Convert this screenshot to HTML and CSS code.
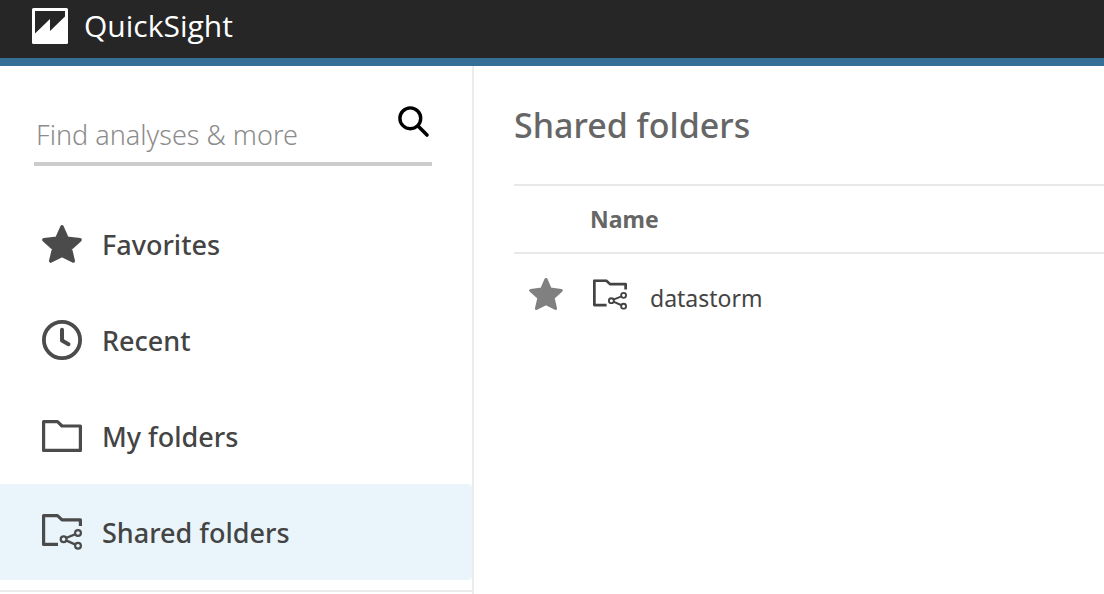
FILE: index.html
```html
<!DOCTYPE html>
<html lang="en">
<head>
<meta charset="utf-8">
<title>QuickSight</title>
<link rel="stylesheet" href="styles.css">
</head>
<body>
<svg class="symbols" aria-hidden="true">
  <symbol id="star" viewBox="0 0 40 40">
    <path fill="currentColor" stroke="currentColor" stroke-width="3.6" stroke-linejoin="round" d="M20 2.9 25 14.2 38 15.8 28.3 24.6 31.2 37 20 31.4 8.8 37 11.7 24.6 2 15.8 15 14.2Z"/>
  </symbol>
  <symbol id="shared" viewBox="0 0 40 36">
    <g fill="none" stroke="currentColor">
      <path stroke-width="3.2" stroke-linejoin="round" d="M16 30.4H1.6V1.6H15.5L20 5.8H38.4V12"/>
      <path stroke-width="2.4" d="M24 24 33.5 20.2M24 26.4 33.5 30.6"/>
      <g stroke-width="2.2"><circle cx="21.6" cy="25.3" r="2.9"/><circle cx="36" cy="19" r="2.9"/><circle cx="36" cy="31.8" r="2.9"/></g>
    </g>
  </symbol>
</svg>
<header class="topbar">
  <svg class="logo" viewBox="0 0 36 36" aria-hidden="true">
    <rect width="36" height="36" rx="1.5" fill="#fff"/>
    <path fill="#262626" d="M3 3H33V8.5L18 23V11L3 25.5Z"/>
  </svg>
  <span class="brand">QuickSight</span>
</header>
<div class="layout">
  <aside class="sidebar">
    <form class="search">
      <input class="search-input" type="text" aria-label="Find analyses &amp; more" placeholder="Find analyses &amp; more">
      <button class="search-button" type="button" aria-label="Search">
        <svg class="search-icon" viewBox="0 0 32 32" aria-hidden="true"><g fill="none" stroke="#000"><circle cx="12.3" cy="12.3" r="10.4" stroke-width="3.4"/><path stroke-width="3.6" stroke-linecap="round" d="M20.5 20.5 29 29"/></g></svg>
      </button>
    </form>
    <nav class="nav">
      <a class="nav-item" href="#"><svg class="nav-icon" viewBox="0 0 40 40" aria-hidden="true"><use href="#star"/></svg>Favorites</a>
      <a class="nav-item" href="#"><svg class="nav-icon" viewBox="0 0 40 40" aria-hidden="true"><g fill="none" stroke="currentColor"><circle cx="20" cy="20" r="18.1" stroke-width="3.8"/><path stroke-width="4" stroke-linecap="round" stroke-linejoin="round" d="M20 9.8V20.4L26.5 24.2"/></g></svg>Recent</a>
      <a class="nav-item" href="#"><svg class="nav-icon folder" viewBox="0 0 40 32" aria-hidden="true"><path fill="none" stroke="currentColor" stroke-width="3.2" stroke-linejoin="round" d="M1.6 30.4V1.6H15.5L20 6H38.4V30.4Z"/></svg>My folders</a>
      <a class="nav-item selected" href="#" aria-current="page"><svg class="nav-icon shared" viewBox="0 0 40 36" aria-hidden="true"><use href="#shared"/></svg>Shared folders</a>
    </nav>
  </aside>
  <main class="content">
    <h1 class="title">Shared folders</h1>
    <table class="folders">
      <thead><tr><th class="star-cell"></th><th class="name-cell">Name</th></tr></thead>
      <tbody><tr>
        <td class="star-cell"><svg class="row-star" viewBox="0 0 40 40" role="img" aria-label="Favorite"><use href="#star"/></svg></td>
        <td class="name-cell"><a class="folder-link" href="#"><svg class="row-folder" viewBox="0 0 40 36" aria-hidden="true"><use href="#shared"/></svg><span class="folder-name">datastorm</span></a></td>
      </tr></tbody>
    </table>
  </main>
</div>
</body>
</html>
```
FILE: styles.css
```css
* { box-sizing: border-box; }
body {
  margin: 0;
  min-height: 100vh;
  display: flex;
  flex-direction: column;
  background: #fff;
  color: #444;
  font-family: "Noto Sans", "Open Sans", sans-serif;
}
.symbols { display: none; }
svg { display: block; flex: none; }
a { color: inherit; text-decoration: none; }
.topbar {
  display: flex;
  align-items: center;
  gap: 16px;
  height: 66px;
  padding: 0 32px 6px;
  background: #262626;
  border-bottom: 8px solid #356f96;
}
.logo { width: 36px; height: 36px; }
.brand {
  color: #fff;
  font-family: "Open Sans", "Noto Sans", sans-serif;
  font-size: 30px;
  line-height: 40px;
}
.layout { flex: 1; display: flex; }
.sidebar {
  flex: none;
  width: 474px;
  border-right: 2px solid #ececec;
}
.search {
  display: flex;
  align-items: flex-start;
  margin: 40px 40px 30px 34px;
  border-bottom: 4px solid #ccc;
}
.search-input {
  flex: 1;
  min-width: 0;
  height: 56px;
  padding: 0 0 0 2px;
  border: 0;
  outline: 0;
  background: none;
  font: 300 27px "Noto Sans", "Open Sans", sans-serif;
}
.search-input::placeholder { color: #8c8c8c; opacity: 1; }
.search-button { padding: 0 2px; border: 0; background: none; }
.search-icon { width: 32px; height: 32px; }
.nav { padding-bottom: 10px; border-bottom: 2px solid #ececec; }
.nav-item {
  display: flex;
  align-items: center;
  gap: 20px;
  height: 96px;
  padding: 0 42px;
  font-size: 27px;
  font-weight: 500;
}
.nav-icon { width: 40px; height: 40px; color: #4b4b4b; }
.folder { height: 32px; }
.shared { height: 36px; }
.selected { background: #e9f5fa; border-radius: 0 4px 4px 0; }
.content { flex: 1; min-width: 0; padding: 34px 0 0 40px; }
.title {
  margin: 0 0 34px;
  color: #666;
  font-size: 34px;
  font-weight: 500;
  line-height: 50px;
}
.folders { width: 100%; border-collapse: separate; border-spacing: 0; }
.folders th {
  height: 70px;
  padding: 0;
  border-top: 2px solid #e8e8e8;
  border-bottom: 2px solid #e8e8e8;
  color: #666;
  font-size: 23px;
  font-weight: 700;
  text-align: left;
}
.folders td { height: 80px; padding: 0; font-size: 23px; }
.folders .star-cell { width: 76px; padding-left: 15px; }
.row-star { width: 34px; height: 34px; color: #808080; }
.folder-link { display: flex; align-items: center; gap: 23px; padding-left: 3px; }
.row-folder { width: 34px; height: 31px; }
.folder-name { padding-top: 8px; }
```
